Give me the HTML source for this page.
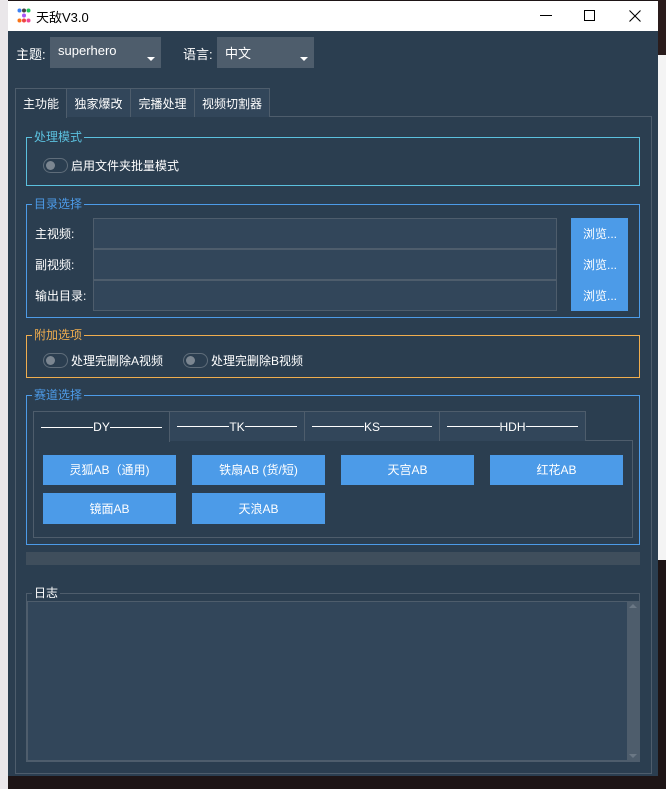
<!DOCTYPE html>
<html><head><meta charset="utf-8"><style>
*{margin:0;padding:0;box-sizing:border-box}
body{width:666px;height:789px;overflow:hidden;position:relative;background:#1e1516;font-family:"Liberation Sans","Noto Sans CJK SC",sans-serif;font-size:12px;color:#fff}
.a{position:absolute}
.win{left:8px;top:1px;width:650px;height:775px;background:#2b3e50}
.tb{left:8px;top:1px;width:650px;height:30px;background:#fff;color:#000}
.combo{background:#4e5d6c;height:31px;top:37px;padding:6px 8px;font-size:13px}
.combo:after{content:"";position:absolute;right:6px;bottom:7px;border:4px solid transparent;border-top:4px solid #fff;border-bottom:0}
.tab{top:88px;height:29px;border:1px solid #4e5d6c;border-bottom:none;background:#32465a;padding:6px 0;text-align:center;font-size:12px}
.grp{left:26px;width:614px;border:1px solid}
.gt{left:32px;background:#2b3e50;padding:0 2px;font-size:12px}
.tg{width:25px;height:15px;border:1px solid #5f6d7a;border-radius:8px;background:#2b3e50}
.tg:before{content:"";position:absolute;left:2px;top:2px;width:9px;height:9px;border-radius:50%;background:#7b8691}
.inp{left:93px;width:464px;height:31px;background:#32465a;border:1px solid #4e5d6c}
.btn{background:#4c9be8;text-align:center;color:#fff;font-size:12px}
.it{top:411px;height:30px;border:1px solid #4e5d6c;border-bottom:none;background:#32465a;display:flex;align-items:center;padding:0 7px;white-space:nowrap}
.it i{flex:1;height:1px;background:#fff}
</style></head><body>
<div class="a" style="left:0;top:0;width:8px;height:789px;background:#eae7ea"></div>
<div class="a" style="left:658px;top:0;width:8px;height:560px;background:#f4f4f4"></div>
<div class="a" style="left:658px;top:0;width:8px;height:55px;background:#2a1c1c"></div>
<div class="a win"></div>
<div class="a tb">
 <svg class="a" style="left:9px;top:7px" width="14" height="16"><circle cx="2.5" cy="2.5" r="2" fill="#3b82f6"/><circle cx="7" cy="2.5" r="2" fill="#444"/><circle cx="11.5" cy="2.5" r="2" fill="#22c55e"/><circle cx="7" cy="7.5" r="2" fill="#a855f7"/><circle cx="2.5" cy="12.5" r="2" fill="#f97316"/><circle cx="7" cy="12.5" r="2" fill="#ef4444"/><circle cx="11.5" cy="12.5" r="2" fill="#ec4899"/></svg>
 <div class="a" style="left:28px;top:6px;font-size:13px">天敌V3.0</div>
 <div class="a" style="left:532px;top:14px;width:12px;height:1px;background:#000"></div>
 <div class="a" style="left:576px;top:9px;width:11px;height:11px;border:1px solid #000"></div>
 <svg class="a" style="left:621px;top:9px" width="12" height="12"><path d="M0.5 0.5L11.5 11.5M11.5 0.5L0.5 11.5" stroke="#000" stroke-width="1.1"/></svg>
</div>
<div class="a" style="left:16px;top:44px;font-size:13px">主题:</div>
<div class="a combo" style="left:50px;width:111px">superhero</div>
<div class="a" style="left:183px;top:44px;font-size:13px">语言:</div>
<div class="a combo" style="left:217px;width:97px">中文</div>
<div class="a" style="left:15px;top:116px;width:637px;height:658px;border:1px solid #4e5d6c"></div>
<div class="a tab" style="left:15px;width:52px;background:#2b3e50;height:30px">主功能</div>
<div class="a tab" style="left:66px;width:65px">独家爆改</div>
<div class="a tab" style="left:130px;width:65px">完播处理</div>
<div class="a tab" style="left:194px;width:76px">视频切割器</div>

<div class="a grp" style="top:137px;height:49px;border-color:#5bc0de"></div>
<div class="a gt" style="top:128px;color:#5bc0de">处理模式</div>
<div class="a tg" style="left:43px;top:158px"></div>
<div class="a" style="left:71px;top:157px">启用文件夹批量模式</div>

<div class="a grp" style="top:204px;height:114px;border-color:#4c9be8"></div>
<div class="a gt" style="top:195px;color:#4c9be8">目录选择</div>
<div class="a" style="left:35px;top:225px">主视频:</div>
<div class="a" style="left:35px;top:256px">副视频:</div>
<div class="a" style="left:35px;top:287px">输出目录:</div>
<div class="a inp" style="top:218px"></div>
<div class="a inp" style="top:249px"></div>
<div class="a inp" style="top:280px"></div>
<div class="a btn" style="left:571px;top:218px;width:57px;height:93px"></div>
<div class="a" style="left:583px;top:225px">浏览...</div>
<div class="a" style="left:583px;top:256px">浏览...</div>
<div class="a" style="left:583px;top:287px">浏览...</div>

<div class="a grp" style="top:335px;height:43px;border-color:#f0ad4e"></div>
<div class="a gt" style="top:326px;color:#f0ad4e">附加选项</div>
<div class="a tg" style="left:43px;top:353px"></div>
<div class="a" style="left:71px;top:352px">处理完删除A视频</div>
<div class="a tg" style="left:183px;top:353px"></div>
<div class="a" style="left:211px;top:352px">处理完删除B视频</div>

<div class="a grp" style="top:395px;height:150px;border-color:#4c9be8"></div>
<div class="a gt" style="top:386px;color:#4c9be8">赛道选择</div>
<div class="a" style="left:33px;top:440px;width:600px;height:98px;border:1px solid #4e5d6c"></div>
<div class="a it" style="left:33px;width:137px;background:#2b3e50;height:31px"><i></i>DY<i></i></div>
<div class="a it" style="left:169px;width:136px"><i></i>TK<i></i></div>
<div class="a it" style="left:304px;width:136px"><i></i>KS<i></i></div>
<div class="a it" style="left:439px;width:147px"><i></i>HDH<i></i></div>
<div class="a btn" style="left:43px;top:455px;width:133px;height:30px;padding-top:6px">灵狐AB（通用)</div>
<div class="a btn" style="left:192px;top:455px;width:133px;height:30px;padding-top:6px">铁扇AB (货/短)</div>
<div class="a btn" style="left:341px;top:455px;width:133px;height:30px;padding-top:6px">天宫AB</div>
<div class="a btn" style="left:490px;top:455px;width:133px;height:30px;padding-top:6px">红花AB</div>
<div class="a btn" style="left:43px;top:493px;width:133px;height:31px;padding-top:7px">镜面AB</div>
<div class="a btn" style="left:192px;top:493px;width:133px;height:31px;padding-top:7px">天浪AB</div>

<div class="a" style="left:26px;top:552px;width:614px;height:13px;background:#3f4e5c"></div>

<div class="a grp" style="top:593px;height:169px;border-color:#4e5d6c"></div>
<div class="a gt" style="top:584px">日志</div>
<div class="a" style="left:27px;top:601px;width:612px;height:160px;background:#32465a;border:1px solid #4e5d6c"></div>
<div class="a" style="left:627px;top:602px;width:12px;height:158px;background:#4e5d6c"></div>
<div class="a" style="left:629px;top:604px;border:4px solid transparent;border-bottom:4px solid #6b7885;border-top:0"></div>
<div class="a" style="left:629px;top:754px;border:4px solid transparent;border-top:4px solid #6b7885;border-bottom:0"></div>
</body></html>
